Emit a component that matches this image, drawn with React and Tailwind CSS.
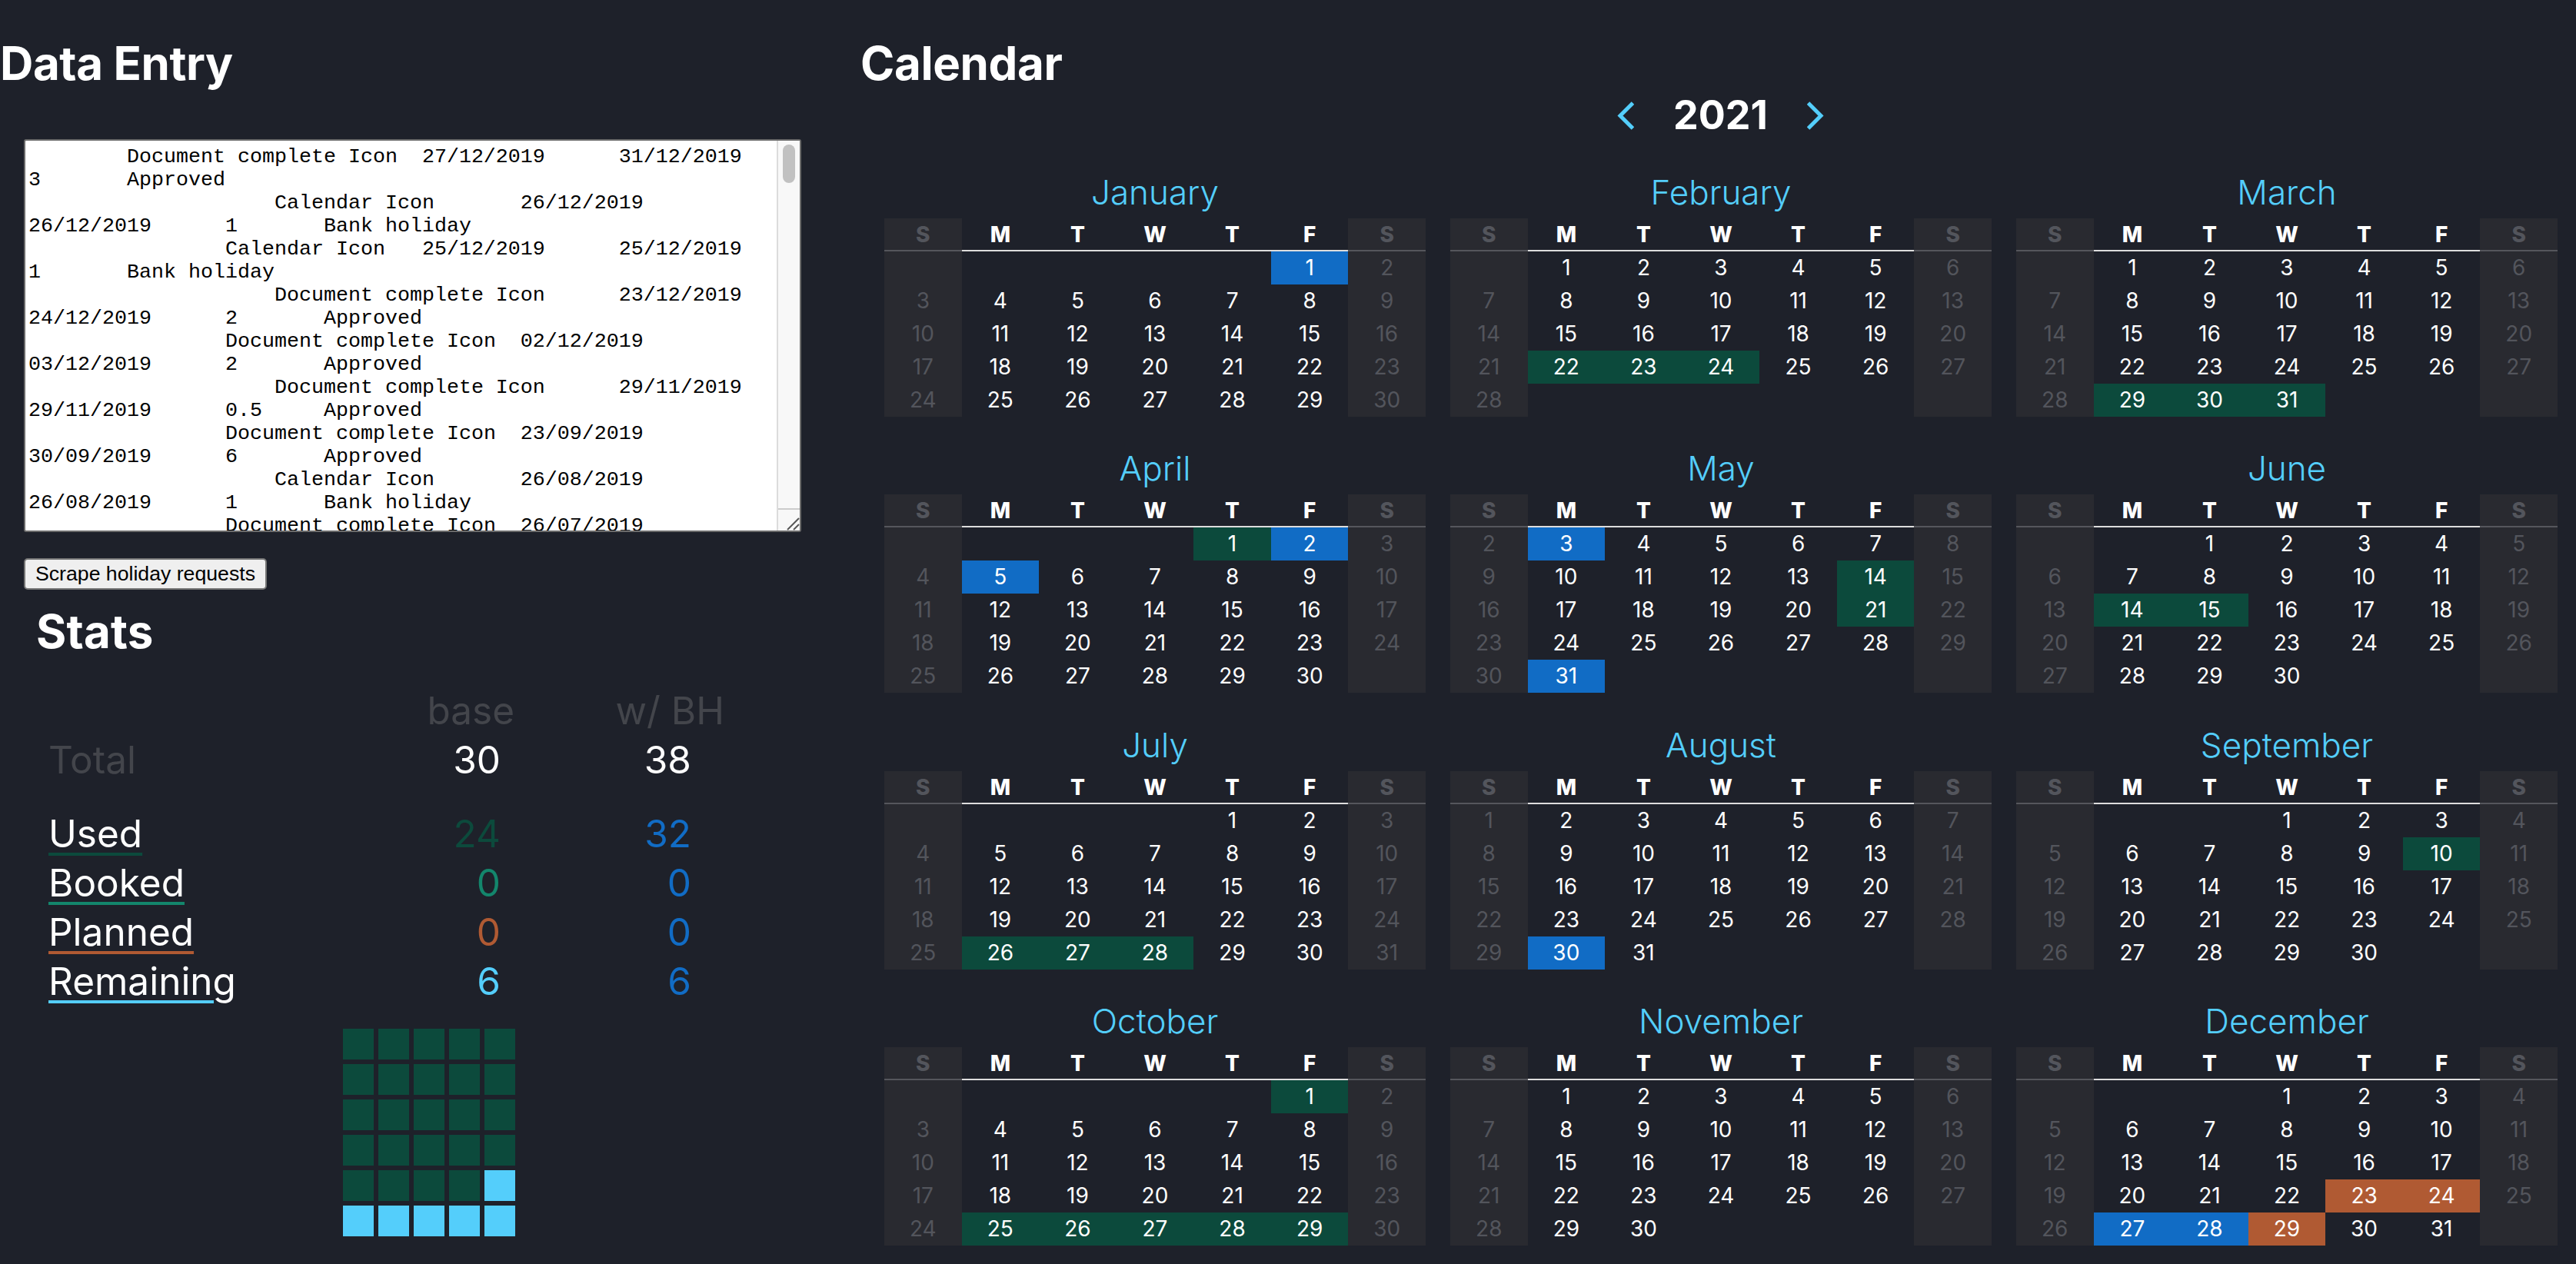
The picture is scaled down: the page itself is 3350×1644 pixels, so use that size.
const BLUE = "bg-[#116cc5]";
const GREEN = "bg-[#0c4a3c]";
const ORANGE = "bg-[#b05a33]";

// offset = column of the 1st in the first row, negative when it falls off the grid
const MONTHS = [
  { name: "January", offset: 5, days: 31, marks: { 1: BLUE } },
  { name: "February", offset: 1, days: 28, marks: { 22: GREEN, 23: GREEN, 24: GREEN } },
  { name: "March", offset: 1, days: 31, marks: { 29: GREEN, 30: GREEN, 31: GREEN } },
  { name: "April", offset: 4, days: 30, marks: { 1: GREEN, 2: BLUE, 5: BLUE } },
  { name: "May", offset: -1, days: 31, marks: { 3: BLUE, 14: GREEN, 21: GREEN, 31: BLUE } },
  { name: "June", offset: 2, days: 30, marks: { 14: GREEN, 15: GREEN } },
  { name: "July", offset: 4, days: 31, marks: { 26: GREEN, 27: GREEN, 28: GREEN } },
  { name: "August", offset: 0, days: 31, marks: { 30: BLUE } },
  { name: "September", offset: 3, days: 30, marks: { 10: GREEN } },
  { name: "October", offset: 5, days: 31, marks: { 1: GREEN, 25: GREEN, 26: GREEN, 27: GREEN, 28: GREEN, 29: GREEN } },
  { name: "November", offset: 1, days: 30, marks: {} },
  { name: "December", offset: 3, days: 31, marks: { 23: ORANGE, 24: ORANGE, 27: BLUE, 28: BLUE, 29: ORANGE } },
];

const WEEKDAYS = ["S", "M", "T", "W", "T", "F", "S"];

const ROWS = `\tDocument complete Icon\t27/12/2019\t31/12/2019
3\tApproved
                    Calendar Icon\t26/12/2019
26/12/2019\t1\tBank holiday
\t\tCalendar Icon\t25/12/2019\t25/12/2019
1\tBank holiday
                    Document complete Icon\t23/12/2019
24/12/2019\t2\tApproved
\t\tDocument complete Icon\t02/12/2019
03/12/2019\t2\tApproved
                    Document complete Icon\t29/11/2019
29/11/2019\t0.5\tApproved
\t\tDocument complete Icon\t23/09/2019
30/09/2019\t6\tApproved
                    Calendar Icon\t26/08/2019
26/08/2019\t1\tBank holiday
\t\tDocument complete Icon\t26/07/2019
`;

const STATS = [
  { label: "Used", line: "decoration-[#0c4a3c]", base: "24", baseColor: "text-[#0c4a3c]", bh: "32" },
  { label: "Booked", line: "decoration-[#13866c]", base: "0", baseColor: "text-[#13866c]", bh: "0" },
  { label: "Planned", line: "decoration-[#b05a33]", base: "0", baseColor: "text-[#b05a33]", bh: "0" },
  { label: "Remaining", line: "decoration-[#54cefb]", base: "6", baseColor: "text-[#54cefb]", bh: "6" },
];

function Month({ month }) {
  const cells = Array.from({ length: 35 }, (_, i) => i - month.offset + 1);
  return (
    <div>
      <div className="h-[62px] text-center text-[44px] leading-[56px] font-light text-[#54cefb]">{month.name}</div>
      <div className="grid grid-cols-7">
        {WEEKDAYS.map((d, i) => {
          const weekend = i === 0 || i === 6;
          return (
            <div
              key={i}
              className={`h-[43px] border-b-2 text-center text-[28px] leading-[42px] font-extrabold ${
                weekend ? "border-[#55565c] bg-[#292a30] text-[#53555c]" : "border-[#dddddd] text-white"
              }`}
            >
              {d}
            </div>
          );
        })}
        {cells.map((day, i) => {
          const weekend = i % 7 === 0 || i % 7 === 6;
          const valid = day >= 1 && day <= month.days;
          const mark = valid ? month.marks[day] : null;
          return (
            <div
              key={i}
              className={`h-[43px] text-center text-[28px] leading-[43px] ${
                weekend ? "bg-[#292a30] text-[#53555c]" : "text-white"
              } ${mark || ""}`}
            >
              {valid ? day : ""}
            </div>
          );
        })}
      </div>
    </div>
  );
}

function Chevron({ points }) {
  return (
    <svg width="22" height="37" viewBox="0 0 22 37" fill="none" stroke="#54cefb" strokeWidth="5">
      <polyline points={points} />
    </svg>
  );
}

export default function App() {
  const squares = Array.from({ length: 30 }, (_, i) => i < 24);

  return (
    <div className="flex h-[1644px] w-[3350px] overflow-hidden bg-[#1e212a] font-['Inter',sans-serif] text-white">
      {/* Left: data entry + stats */}
      <div className="w-[1119px] shrink-0">
        <h1 className="mt-[46px] h-[72px] text-[60px] leading-[72px] font-bold tracking-[-0.4px]">Data Entry</h1>

        <div className="relative mt-[63px] ml-[31px] h-[511px] w-[1011px]">
          <textarea
            readOnly
            defaultValue={ROWS}
            className="block h-full w-full resize-none overflow-hidden rounded-[3px] border-2 border-[#6b6b6b] bg-white px-[4px] pt-[6px] font-['Liberation_Mono',monospace] text-[26.67px] leading-[30px] [tab-size:8] text-black"
          />
          {/* scrollbar and resize corner, headless chrome doesn't paint the native ones */}
          <div className="pointer-events-none absolute top-[2px] right-[2px] bottom-[2px] w-[30px] border-l-2 border-[#dcdcdc] bg-[#f8f8f8]">
            <div className="absolute top-[5px] left-[6px] h-[50px] w-[16px] rounded-full bg-[#c1c1c1]" />
            <div className="absolute right-0 bottom-0 left-0 h-[29px] border-t-2 border-[#cccccc]">
              <svg width="28" height="27" viewBox="0 0 28 27" stroke="#555555" strokeWidth="2">
                <line x1="12" y1="26" x2="27" y2="11" />
                <line x1="20" y1="26" x2="27" y2="19" />
              </svg>
            </div>
          </div>
        </div>

        <button className="mt-[34px] ml-[31px] block h-[41px] w-[316px] rounded-[5px] border-2 border-[#767676] bg-[#efefef] font-['Liberation_Sans',sans-serif] text-[26.67px] leading-none text-black">
          Scrape holiday requests
        </button>

        <h2 className="mt-[24px] ml-[47px] h-[60px] text-[60px] leading-[60px] font-bold tracking-[0.2px]">Stats</h2>

        <div className="mt-[41px] ml-[63px] grid w-[887px] grid-cols-[1fr_270px_270px] text-[49.5px] leading-[64px]">
          <div />
          <div className="pr-[11px] text-right text-[#43454b]">base</div>
          <div className="pr-[8px] text-right text-[#43454b]">w/ BH</div>
          <div className="mb-[32px] text-[#43454b]">Total</div>
          <div className="mb-[32px] pr-[29px] text-right">30</div>
          <div className="mb-[32px] pr-[51px] text-right">38</div>
          {STATS.map((s) => (
            <div key={s.label} className="contents">
              <div>
                <span className={`underline decoration-[4px] underline-offset-[7px] ${s.line}`}>{s.label}</span>
              </div>
              <div className={`pr-[29px] text-right ${s.baseColor}`}>{s.base}</div>
              <div className="pr-[51px] text-right text-[#116cc5]">{s.bh}</div>
            </div>
          ))}
        </div>

        <div className="mt-[30px] ml-[446px] grid w-[224px] grid-cols-5 gap-[6px]">
          {squares.map((used, i) => (
            <div key={i} className={`h-[40px] w-[40px] ${used ? "bg-[#0c4a3c]" : "bg-[#54cefb]"}`} />
          ))}
        </div>
      </div>

      {/* Right: calendar */}
      <div className="flex-1">
        <h1 className="mt-[46px] h-[72px] text-[60px] leading-[72px] font-bold tracking-[-0.4px]">Calendar</h1>
        <div className="flex h-[64px] items-center justify-center pl-[6px]">
          <Chevron points="20.5,2 4,18.5 20.5,35" />
          <span className="mx-[51px] text-[52px] leading-[64px] font-bold">2021</span>
          <Chevron points="1.5,2 18,18.5 1.5,35" />
        </div>
        <div className="mt-[40px] ml-[31px] grid w-[2176px] grid-cols-3 gap-x-[32px] gap-y-[39.33px]">
          {MONTHS.map((m) => (
            <Month key={m.name} month={m} />
          ))}
        </div>
      </div>
    </div>
  );
}
